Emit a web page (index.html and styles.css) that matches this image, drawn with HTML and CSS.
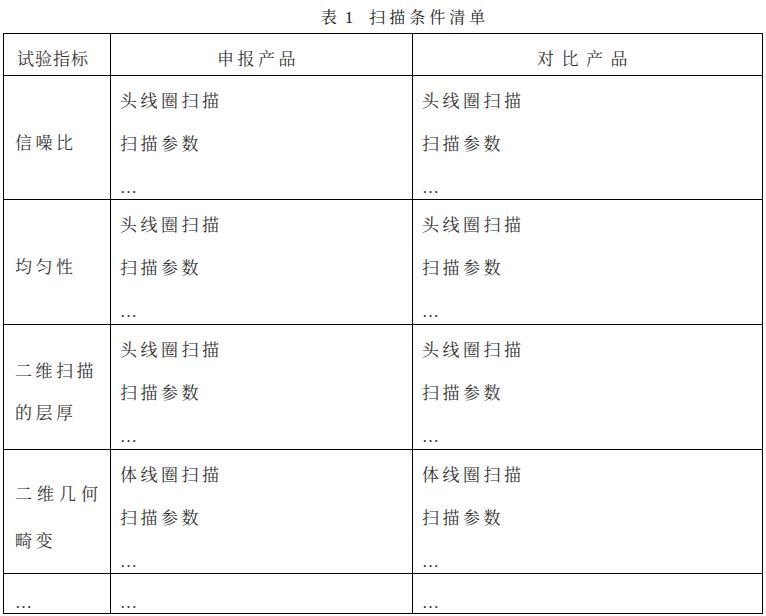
FILE: index.html
```html
<!DOCTYPE html>
<html lang="zh-CN">
<head>
<meta charset="utf-8">
<title>表 1 扫描条件清单</title>
<link rel="stylesheet" href="styles.css">
</head>
<body>
<div class="page">
  <div class="caption">表 <span class="no">1</span> <span class="ttl">扫描条件清单</span></div>
  <div class="table">
    <div class="cell head first tight">试验指标</div>
    <div class="cell head">申报产品</div>
    <div class="cell head loose">对比产品</div>

    <div class="cell name first"><span>信噪比</span></div>
    <div class="cell list"><p>头线圈扫描</p><p>扫描参数</p><p>…</p></div>
    <div class="cell list"><p>头线圈扫描</p><p>扫描参数</p><p>…</p></div>

    <div class="cell name first"><span>均匀性</span></div>
    <div class="cell list"><p>头线圈扫描</p><p>扫描参数</p><p>…</p></div>
    <div class="cell list"><p>头线圈扫描</p><p>扫描参数</p><p>…</p></div>

    <div class="cell name first"><span>二维扫描<br>的层厚</span></div>
    <div class="cell list"><p>头线圈扫描</p><p>扫描参数</p><p>…</p></div>
    <div class="cell list"><p>头线圈扫描</p><p>扫描参数</p><p>…</p></div>

    <div class="cell name first wide"><span><span class="spread">二维几何</span><br>畸变</span></div>
    <div class="cell list"><p>体线圈扫描</p><p>扫描参数</p><p>…</p></div>
    <div class="cell list"><p>体线圈扫描</p><p>扫描参数</p><p>…</p></div>

    <div class="cell tail first">…</div>
    <div class="cell tail">…</div>
    <div class="cell tail">…</div>
  </div>
</div>
</body>
</html>
```

FILE: styles.css
```css
html, body {
  margin: 0;
  padding: 0;
  background: #ffffff;
}

body {
  font-family: "Liberation Serif", "Noto Serif CJK SC", "Noto Sans CJK SC", serif;
  color: #333333;
}

.page {
  width: 766px;
  height: 616px;
  overflow: hidden;
}

.caption {
  box-sizing: border-box;
  height: 33px;
  padding-top: 1px;
  line-height: 33px;
  font-size: 16px;
  text-align: center;
  padding-left: 44px;
  color: #222222;
  white-space: nowrap;
}

.caption .no {
  margin: 0 12px 0 4px;
  font-size: 17px;
}

.caption .ttl {
  letter-spacing: 4px;
}

.table {
  margin-left: 3px;
  width: 760px;
  box-sizing: border-box;
  display: grid;
  grid-template-columns: 106px 301px 349px;
  grid-template-rows: 41px 123px 124px 124px 123px 39px;
  gap: 1px;
  padding: 1px;
  background: #000000;
}

.cell {
  background: #ffffff;
  box-sizing: border-box;
  padding: 3.5px 16px 0 9px;
  font-size: 17px;
  line-height: 43px;
  letter-spacing: 3.5px;
  white-space: nowrap;
  overflow: visible;
}

.cell.first {
  padding-left: 11px;
}

.head {
  text-align: center;
}

.head.tight {
  letter-spacing: 1px;
  padding-left: 6px;
  padding-right: 14px;
}

.head.loose {
  letter-spacing: 7.5px;
  padding-right: 12px;
}

.list p {
  margin: 0;
}

.name {
  display: flex;
  align-items: center;
  padding-top: 12px;
  line-height: 42px;
}

.name.wide {
  line-height: 47px;
}

.spread {
  letter-spacing: 5px;
}

.tail {
  padding-top: 6.5px;
}
```
